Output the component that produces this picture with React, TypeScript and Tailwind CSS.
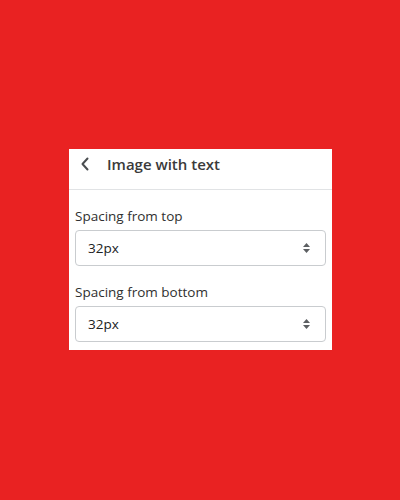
import React from "react";

const fields = [
  { label: "Spacing from top", value: "32px" },
  { label: "Spacing from bottom", value: "32px" },
];

function SelectArrows() {
  return (
    <svg width="9" height="12" viewBox="0 0 9 12" className="shrink-0">
      <path d="M4.5 1 L8 5 H1 Z" fill="#5c5f62" />
      <path d="M4.5 11 L8 7 H1 Z" fill="#5c5f62" />
    </svg>
  );
}

export default function App() {
  return (
    <div
      className="w-[400px] h-[500px] bg-[#e92222] pt-[149px] pl-[69px]"
      style={{ fontFamily: '"Open Sans", "Noto Sans", sans-serif' }}
    >
      <div className="w-[263px] h-[201px] bg-white">
        {/* header */}
        <div className="flex items-center h-[41px] pb-[11px] border-b border-[#e1e3e5]">
          <svg width="10" height="14" viewBox="0 0 10 14" className="ml-[11px]">
            <path
              d="M7.5 1.5 L2.5 7 L7.5 12.5"
              fill="none"
              stroke="#4a4d50"
              strokeWidth="2"
              strokeLinecap="round"
              strokeLinejoin="round"
            />
          </svg>
          <span className="ml-[17px] text-[15px] leading-5 font-semibold text-[#3a3a3a]">
            Image with text
          </span>
        </div>
        <div className="px-[6px] pt-4 pb-2 flex flex-col gap-4">
          {fields.map((f) => (
            <div key={f.label} className="flex flex-col gap-1">
              <label className="text-[13.5px] leading-5 text-[#303030]">{f.label}</label>
              <div className="h-9 flex items-center justify-between pl-3 pr-[14px] border border-[#c9cccf] rounded-[4px] bg-white">
                <span className="text-[13.5px] text-[#202223]">{f.value}</span>
                <SelectArrows />
              </div>
            </div>
          ))}
        </div>
      </div>
    </div>
  );
}
